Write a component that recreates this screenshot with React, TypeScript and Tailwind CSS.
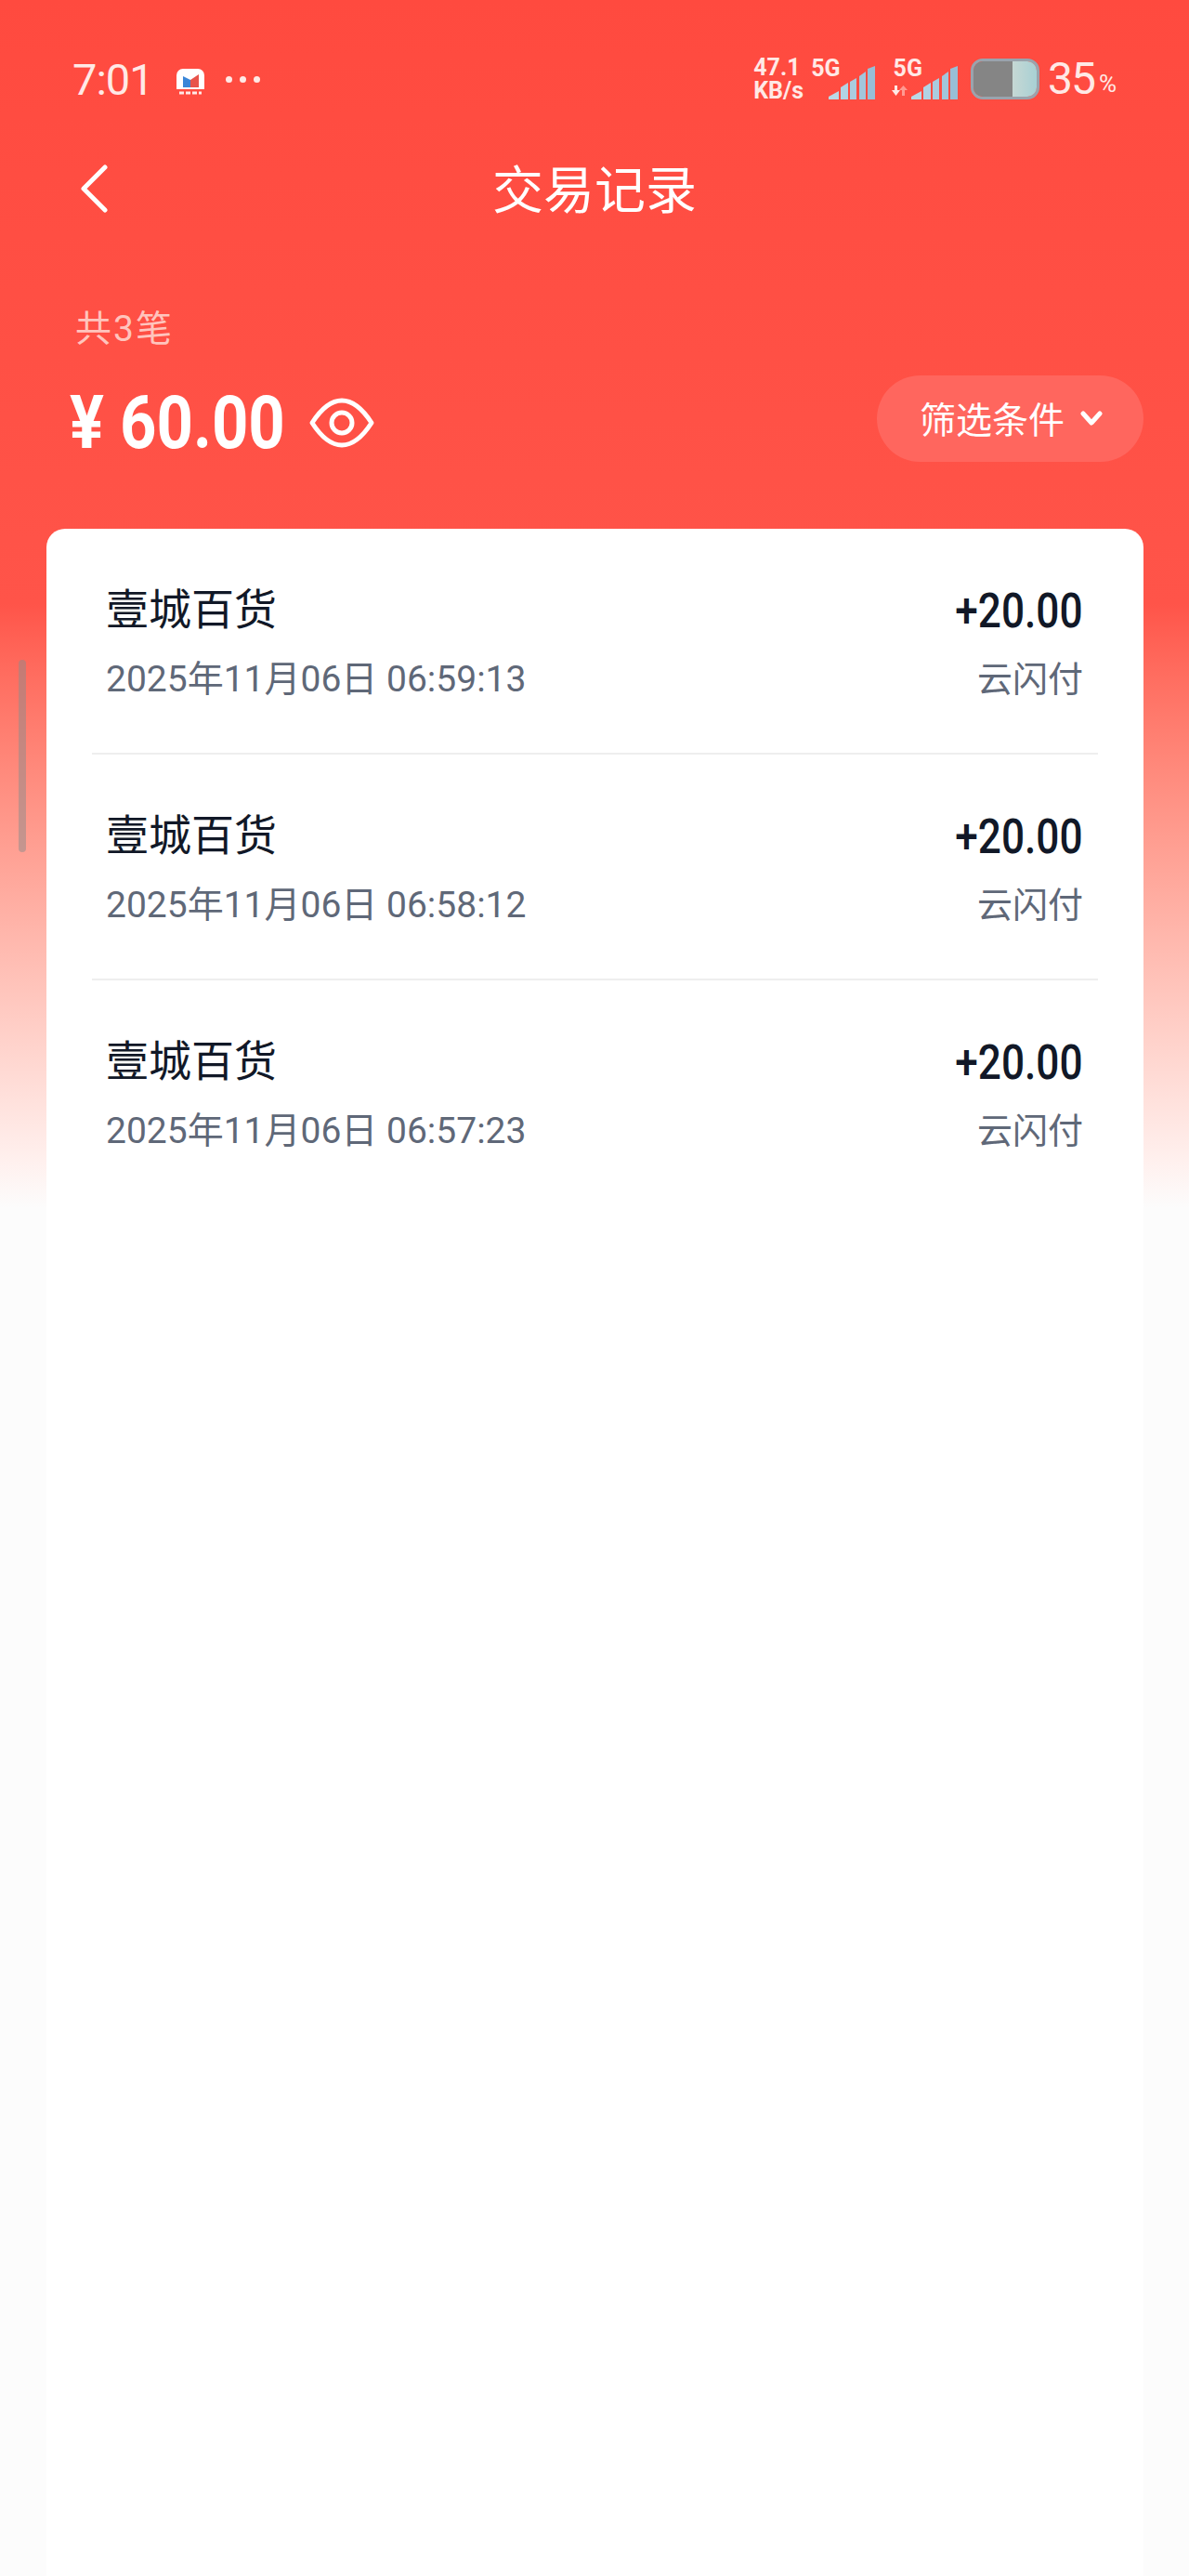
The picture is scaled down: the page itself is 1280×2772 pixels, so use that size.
import React from "react";

const records = [
  { name: "壹城百货", time: "2025年11月06日 06:59:13", amount: "+20.00", channel: "云闪付" },
  { name: "壹城百货", time: "2025年11月06日 06:58:12", amount: "+20.00", channel: "云闪付" },
  { name: "壹城百货", time: "2025年11月06日 06:57:23", amount: "+20.00", channel: "云闪付" },
];

const Bars = () => (
  <svg width="50" height="36" viewBox="0 0 50 36" className="self-end">
    <path d="M0 36v-3l11-6v9z" fill="#bad8e6" />
    <path d="M13 36V23l8-5v18z" fill="#b2d3e4" />
    <path d="M23 36V17l7-4v23z" fill="#aaccdf" />
    <path d="M33 36V11l7-5v30z" fill="#a2c6db" />
    <path d="M42 36V3l8-3v36z" fill="#98bed6" />
  </svg>
);

const StatusBar = () => (
  <div className="flex h-[170px] items-center justify-between pl-[78px] pr-[78px] font-['Roboto','Noto_Sans_CJK_SC',sans-serif] text-[#ffe9e6]">
    <div className="flex items-center">
      <span className="w-[112px] text-[47px] leading-none tracking-[-1px]">7:01</span>
      <svg width="30" height="30" viewBox="0 0 30 30" className="mt-[8px]">
        <path d="M7 0h16a7 7 0 0 1 7 7v15H0V7a7 7 0 0 1 7-7z" fill="#fff" />
        <path d="M7 8l8 4v8H7z" fill="#3a86d8" />
        <path d="M15 12l9-6v14h-9z" fill="#e8534a" />
        <path d="M3 26h5M10 26h5M17 26h5M24 26h3" stroke="#ffe9e6" strokeWidth="3" />
      </svg>
      <div className="ml-[23px] flex gap-[8px]">
        <span className="h-[7px] w-[7px] rounded-full bg-[#ffe9e6]" />
        <span className="h-[7px] w-[7px] rounded-full bg-[#ffe9e6]" />
        <span className="h-[7px] w-[7px] rounded-full bg-[#ffe9e6]" />
      </div>
    </div>
    <div className="flex h-[44px] items-center">
      <div className="w-[62px] text-[25px] font-bold leading-[25px]">
        <div>47.1</div>
        <div>KB/s</div>
      </div>
      <div className="flex h-[44px]">
        <span className="mr-[-13px] self-start text-[25px] font-bold leading-[22px]">5G</span>
        <Bars />
      </div>
      <div className="relative ml-[20px] flex h-[44px]">
        <span className="mr-[-12px] self-start text-[25px] font-bold leading-[22px]">5G</span>
        <Bars />
        <svg width="18" height="11" viewBox="0 0 18 11" className="absolute bottom-[4px] left-[-3px]">
          <path d="M4 0h3v5h3l-4.500 6L1 5h3z" fill="#ffe9e6" />
          <path d="M12 11h3V5h3l-4.500-5L9 5h3z" fill="#ff9a92" />
        </svg>
      </div>
      <div className="ml-[14px] flex h-[44px] w-[74px] overflow-hidden rounded-[13px] border-[3px] border-[#9aa3ad]">
        <div className="w-[42px] bg-[#858585]" />
        <div className="flex-1 bg-gradient-to-r from-[#c6d8d4] to-[#a8d0d4]" />
      </div>
      <span className="ml-[9px] text-[48px] leading-none tracking-[-2px]">35</span>
      <span className="ml-[5px] mt-[10px] text-[26px] leading-none">%</span>
    </div>
  </div>
);

export default function App() {
  return (
    <div className="relative h-[2772px] w-[1280px] overflow-hidden bg-[#fcfcfc] font-['Noto_Sans_CJK_SC',sans-serif]">
      <div className="h-[1300px] bg-gradient-to-b from-[#ff4a3f] via-[#ff5449] via-[50%] to-[#fcfcfc]">
        <StatusBar />
        <div className="grid h-[66px] grid-cols-[1fr_auto_1fr] items-center pl-[86px] text-white">
          <svg width="30" height="52" viewBox="0 0 30 52">
            <path d="M27 3L4 26l23 23" fill="none" stroke="#fff" strokeWidth="5" strokeLinecap="round" strokeLinejoin="round" />
          </svg>
          <h1 className="mb-[6px] mr-[86px] text-[55px] font-normal leading-none">交易记录</h1>
          <span />
        </div>
        <div className="mt-[91px] pl-[81px] font-['Roboto','Noto_Sans_CJK_SC',sans-serif] text-[39px] leading-[54px] tracking-[2px] text-[#ffc4bd]">共3笔</div>
        <div className="mt-[23px] flex h-[93px] items-center justify-between pl-[75px] pr-[49px]">
          <div className="mt-[9px] flex items-center text-white">
            <div className="w-[233px] whitespace-nowrap">
              <span className="inline-block origin-left scale-x-[0.86] font-['Roboto',sans-serif] text-[80px] font-bold leading-[90px]">¥ 60.00</span>
            </div>
            <svg width="70" height="54" viewBox="0 0 70 54" className="ml-[25px]">
              <path d="M3 27C14 10 24 3 35 3s21 7 32 24C56 44 46 51 35 51S14 44 3 27z" fill="none" stroke="#fff" strokeWidth="5" strokeLinejoin="round" />
              <circle cx="35" cy="27" r="11" fill="none" stroke="#fff" strokeWidth="5" />
            </svg>
          </div>
          <button className="flex h-[93px] w-[287px] items-center rounded-full bg-[#ff665e] pb-[2px] pl-[46px] text-[39px] leading-none text-white">
            筛选条件
            <svg width="24" height="17" viewBox="0 0 24 17" className="ml-[17px] mt-[2px]">
              <path d="M3 3l9 10 9-10" fill="none" stroke="#fff" strokeWidth="5" strokeLinecap="round" strokeLinejoin="round" />
            </svg>
          </button>
        </div>
      </div>
      <div className="absolute left-[20px] top-[710px] h-[207px] w-[8px] rounded-full bg-[#8c8c8c]/50" />
      <div className="absolute left-[50px] top-[569px] h-[2300px] w-[1181px] rounded-[20px] bg-white px-[49px]">
        {records.map((r, i) => (
          <div key={r.time} className={i < 2 ? "flex h-[243px] items-start justify-between border-b-2 border-[#eeeeee] pl-[15px] pr-[16px] pt-[53px]" : "flex h-[243px] items-start justify-between pl-[15px] pr-[16px] pt-[53px]"}>
            <div>
              <div className="text-[46px] leading-[60px] text-[#111827]">{r.name}</div>
              <div className="mt-[22px] font-['Roboto','Noto_Sans_CJK_SC',sans-serif] text-[39px] leading-[54px] text-[#5f6878]">{r.time}</div>
            </div>
            <div className="text-right">
              <div className="mt-[6px] whitespace-nowrap">
                <span className="inline-block origin-right scale-x-[0.85] font-['Roboto',sans-serif] text-[52px] font-medium leading-[60px] text-[#111827]">{r.amount}</span>
              </div>
              <div className="mt-[13px] text-[38px] leading-[54px] text-[#5f6878]">{r.channel}</div>
            </div>
          </div>
        ))}
      </div>
    </div>
  );
}
